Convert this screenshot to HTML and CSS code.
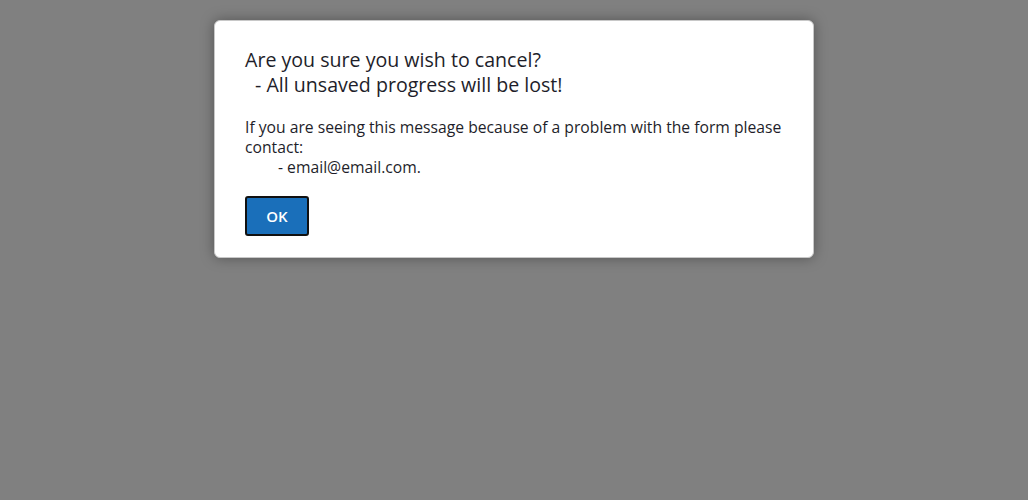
FILE: index.html
```html
<!DOCTYPE html>
<html>
<head>
<meta charset="utf-8">
<link rel="stylesheet" href="styles.css">
</head>
<body>
<div class="overlay">
  <div class="dialog">
    <h2 class="title">Are you sure you wish to cancel?<br><span class="indent-sm">- All unsaved progress will be lost!</span></h2>
    <p class="message">If you are seeing this message because of a problem with the form please contact:<br><span class="indent-lg">- email@email.com.</span></p>
    <button class="ok">OK</button>
  </div>
</div>
</body>
</html>
```
FILE: styles.css
```css
html, body {
  margin: 0;
  padding: 0;
  height: 100%;
}
body {
  background: #808080;
  font-family: "Open Sans", "Noto Sans", sans-serif;
  color: #1e1e2a;
}
.overlay {
  display: flex;
  justify-content: center;
  padding-top: 20px;
}
.dialog {
  width: 600px;
  box-sizing: border-box;
  background: #fff;
  border: 1px solid #c8c8c8;
  border-radius: 6px;
  box-shadow: 0 0 14px rgba(0, 0, 0, 0.35);
  padding: 26px 30px 21px 30px;
}
.title {
  margin: 0;
  font-size: 19.6px;
  font-weight: 400;
  line-height: 25px;
}
.indent-sm {
  padding-left: 10px;
}
.message {
  margin: 20px 0 19px 0;
  font-size: 15.7px;
  line-height: 20px;
}
.indent-lg {
  padding-left: 33px;
}
.ok {
  width: 64px;
  height: 40px;
  background: #1a6fba;
  color: #fff;
  border: 2px solid #111;
  border-radius: 3px;
  font-family: inherit;
  font-size: 15px;
  font-weight: 600;
  display: block;
}
```
